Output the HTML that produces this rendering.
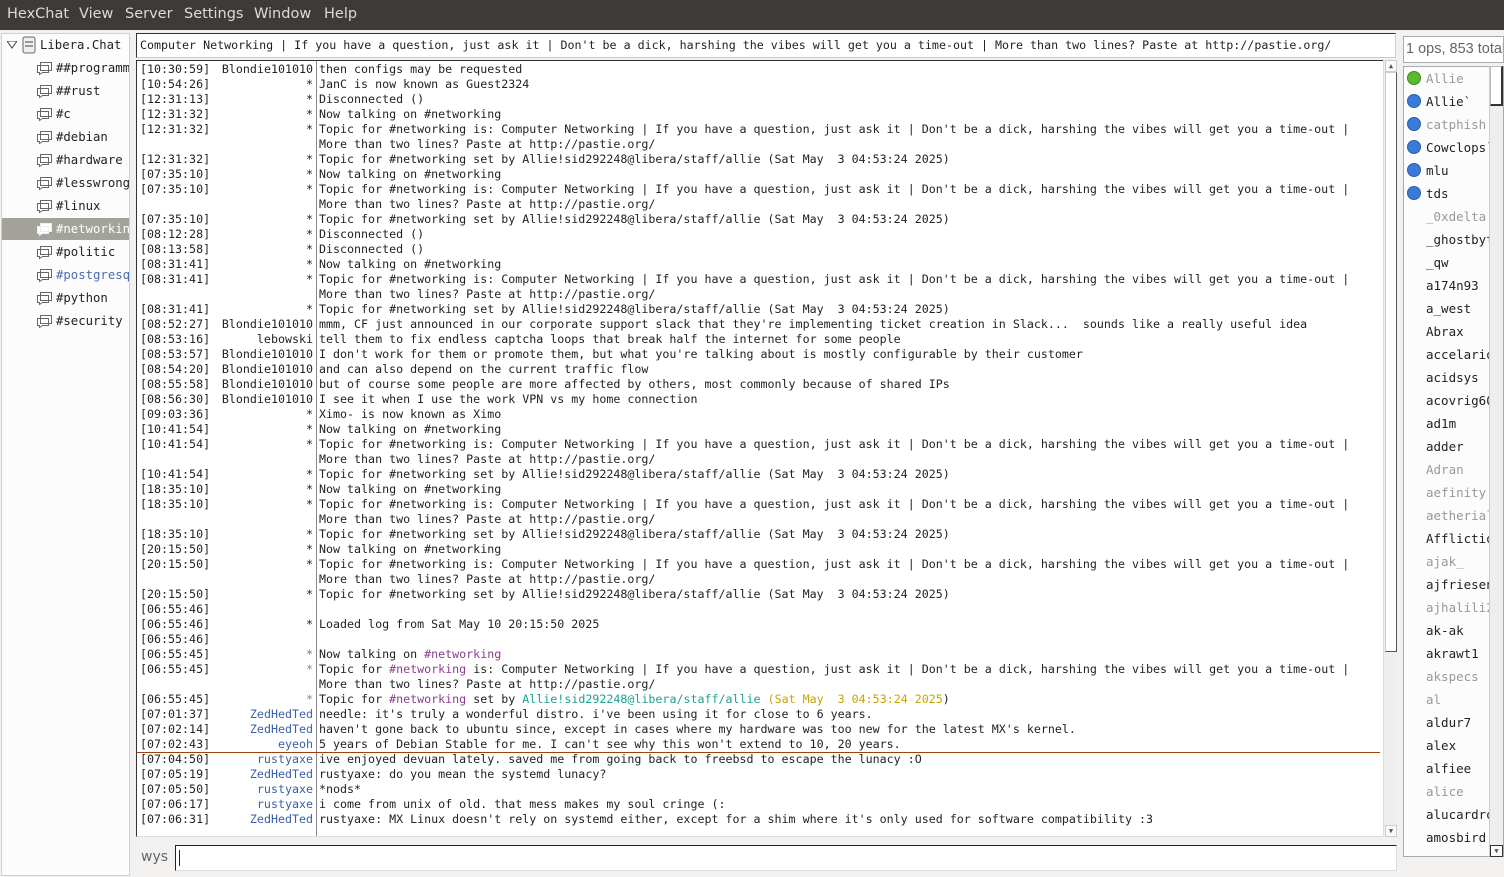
<!DOCTYPE html>
<html><head><meta charset="utf-8"><style>
*{margin:0;padding:0;box-sizing:border-box}
body{width:1504px;height:877px;background:#f2f1f0;font-family:"DejaVu Sans Mono","Liberation Mono",monospace;font-size:11.65px;color:#222;position:relative;overflow:hidden}
#menu{position:absolute;left:0;top:0;width:1504px;height:30px;background:#3c3b37;color:#dfdbd2;font-family:"DejaVu Sans","Liberation Sans",sans-serif;font-size:14.5px}
#menu span{position:absolute;top:6px}
#side{position:absolute;left:1px;top:33px;width:129px;height:843px;background:#fcfcfc;border:1px solid #d3d1cc;font-family:"DejaVu Sans Mono",monospace;font-size:12.3px}
.it{position:absolute;left:0;width:127px;height:22px;line-height:22px;white-space:nowrap;overflow:hidden}
.it svg{position:absolute;left:34px;top:4px}
.it span{position:absolute;left:54px}
.sel{background:#a3a29b;color:#fff}
#topic{position:absolute;left:136px;top:33px;width:1260px;height:25px;background:#fff;border:1px solid #333;border-right-color:#ccc;border-bottom-color:#ccc;line-height:22px;padding-left:3px;white-space:nowrap;overflow:hidden}
#chat{position:absolute;left:136px;top:60px;width:1261px;height:777px;background:#fff;border:1px solid #333;border-right-color:#ddd;border-bottom-color:#ddd}
#sep{position:absolute;left:179px;top:0;width:1px;height:775px;background:#888}
#rows{position:absolute;left:0;top:1px}
.r{height:15px;line-height:15px;position:relative;white-space:pre;width:1245px}
.r i{font-style:normal;position:absolute;left:3px}
.r b{font-weight:normal;position:absolute;right:1069px;text-align:right}
.r s{text-decoration:none;position:absolute;left:182px}
.g{color:#4aa02c}.p{color:#8a3d8a}.t{color:#1f9f8f}.y{color:#c9a300}.bl{color:#3b5ea8}.st{color:#888}
#marker{position:absolute;left:0;top:691px;width:1243px;height:1px;background:#a0410d}
#vs{position:absolute;left:1383px;top:60px;width:14px;height:777px;background:#eee;border-left:1px solid #ddd}
#wys{position:absolute;left:141px;top:849px;font-family:"DejaVu Sans",sans-serif;font-size:14px;color:#666}
#inp{position:absolute;left:175px;top:845px;width:1222px;height:26px;background:#fff;border:1px solid #222;border-right-color:#ddd;border-bottom-color:#ddd}
#inp:after{content:"";position:absolute;left:3px;top:4px;width:1px;height:16px;background:#222}
#uh{position:absolute;left:1403px;top:36px;width:101px;height:27px;background:#fff;border:1px solid #aaa;font-family:"Liberation Sans",sans-serif;font-size:14.5px;color:#666;line-height:25px;padding-left:2px;white-space:nowrap;overflow:hidden}
#ul{position:absolute;left:1403px;top:66px;width:101px;height:791px;background:#fcfcfc;border:1px solid #aaa;font-size:12.5px;overflow:hidden}
#ul div{position:absolute;left:22px;height:23px;line-height:23px;white-space:nowrap}
#ul .d{position:absolute;left:3px;width:14px;height:14px;border-radius:50%;background:#3a7ad9;border:1px solid #2a5fa8}
#uvs{position:absolute;left:1489px;top:66px;width:14px;height:791px;background:#eee;border-left:1px solid #ccc}
.gr{color:#999}
</style></head><body>
<div id="menu"><span style="left:7px">HexChat</span><span style="left:79px">View</span><span style="left:125px">Server</span><span style="left:184px">Settings</span><span style="left:254px">Window</span><span style="left:324px">Help</span></div>

<div id="side">
<div class="it" style="top:0"><svg style="left:5px;top:7px" width="10" height="8"><path d="M0 0H10L5 7Z" fill="none" stroke="#444"/></svg><svg style="left:20px;top:2px" width="14" height="18"><rect x="1" y="1" width="12" height="16" rx="2" fill="#eee" stroke="#666"/><rect x="3" y="5" width="8" height="2" fill="#999"/><rect x="3" y="9" width="8" height="2" fill="#999"/></svg><span style="left:38px">Libera.Chat</span></div>
<div class="it" style="top:23px"><svg width="17" height="15"><path d="M4.5 1.5h11v8h-11z M1.5 4.5h11v7h-6l-3 2v-2h-2z" fill="#fff" stroke="#666"/></svg><span>##programming</span></div>
<div class="it" style="top:46px"><svg width="17" height="15"><path d="M4.5 1.5h11v8h-11z M1.5 4.5h11v7h-6l-3 2v-2h-2z" fill="#fff" stroke="#666"/></svg><span>##rust</span></div>
<div class="it" style="top:69px"><svg width="17" height="15"><path d="M4.5 1.5h11v8h-11z M1.5 4.5h11v7h-6l-3 2v-2h-2z" fill="#fff" stroke="#666"/></svg><span>#c</span></div>
<div class="it" style="top:92px"><svg width="17" height="15"><path d="M4.5 1.5h11v8h-11z M1.5 4.5h11v7h-6l-3 2v-2h-2z" fill="#fff" stroke="#666"/></svg><span>#debian</span></div>
<div class="it" style="top:115px"><svg width="17" height="15"><path d="M4.5 1.5h11v8h-11z M1.5 4.5h11v7h-6l-3 2v-2h-2z" fill="#fff" stroke="#666"/></svg><span>#hardware</span></div>
<div class="it" style="top:138px"><svg width="17" height="15"><path d="M4.5 1.5h11v8h-11z M1.5 4.5h11v7h-6l-3 2v-2h-2z" fill="#fff" stroke="#666"/></svg><span>#lesswrong</span></div>
<div class="it" style="top:161px"><svg width="17" height="15"><path d="M4.5 1.5h11v8h-11z M1.5 4.5h11v7h-6l-3 2v-2h-2z" fill="#fff" stroke="#666"/></svg><span>#linux</span></div>
<div class="it sel" style="top:184px"><svg width="17" height="15"><path d="M4.5 1.5h11v8h-11z M1.5 4.5h11v7h-6l-3 2v-2h-2z" fill="#fff" stroke="#eee"/></svg><span>#networking</span></div>
<div class="it" style="top:207px"><svg width="17" height="15"><path d="M4.5 1.5h11v8h-11z M1.5 4.5h11v7h-6l-3 2v-2h-2z" fill="#fff" stroke="#666"/></svg><span>#politic</span></div>
<div class="it" style="top:230px"><svg width="17" height="15"><path d="M4.5 1.5h11v8h-11z M1.5 4.5h11v7h-6l-3 2v-2h-2z" fill="#fff" stroke="#666"/></svg><span style="color:#4a6cb5">#postgresql</span></div>
<div class="it" style="top:253px"><svg width="17" height="15"><path d="M4.5 1.5h11v8h-11z M1.5 4.5h11v7h-6l-3 2v-2h-2z" fill="#fff" stroke="#666"/></svg><span>#python</span></div>
<div class="it" style="top:276px"><svg width="17" height="15"><path d="M4.5 1.5h11v8h-11z M1.5 4.5h11v7h-6l-3 2v-2h-2z" fill="#fff" stroke="#666"/></svg><span>#security</span></div>
</div>

<div id="topic">Computer Networking | If you have a question, just ask it | Don't be a dick, harshing the vibes will get you a time-out | More than two lines? Paste at http://pastie.org/</div>

<div id="chat"><div id="sep"></div><div id="rows">
<div class="r"><i>[10:30:59]</i><b>Blondie101010</b><s>then configs may be requested</s></div>
<div class="r"><i>[10:54:26]</i><b>*</b><s>JanC is now known as Guest2324</s></div>
<div class="r"><i>[12:31:13]</i><b>*</b><s>Disconnected ()</s></div>
<div class="r"><i>[12:31:32]</i><b>*</b><s>Now talking on #networking</s></div>
<div class="r"><i>[12:31:32]</i><b>*</b><s>Topic for #networking is: Computer Networking | If you have a question, just ask it | Don't be a dick, harshing the vibes will get you a time-out |</s></div>
<div class="r"><s>More than two lines? Paste at http://pastie.org/</s></div>
<div class="r"><i>[12:31:32]</i><b>*</b><s>Topic for #networking set by Allie!sid292248@libera/staff/allie (Sat May  3 04:53:24 2025)</s></div>
<div class="r"><i>[07:35:10]</i><b>*</b><s>Now talking on #networking</s></div>
<div class="r"><i>[07:35:10]</i><b>*</b><s>Topic for #networking is: Computer Networking | If you have a question, just ask it | Don't be a dick, harshing the vibes will get you a time-out |</s></div>
<div class="r"><s>More than two lines? Paste at http://pastie.org/</s></div>
<div class="r"><i>[07:35:10]</i><b>*</b><s>Topic for #networking set by Allie!sid292248@libera/staff/allie (Sat May  3 04:53:24 2025)</s></div>
<div class="r"><i>[08:12:28]</i><b>*</b><s>Disconnected ()</s></div>
<div class="r"><i>[08:13:58]</i><b>*</b><s>Disconnected ()</s></div>
<div class="r"><i>[08:31:41]</i><b>*</b><s>Now talking on #networking</s></div>
<div class="r"><i>[08:31:41]</i><b>*</b><s>Topic for #networking is: Computer Networking | If you have a question, just ask it | Don't be a dick, harshing the vibes will get you a time-out |</s></div>
<div class="r"><s>More than two lines? Paste at http://pastie.org/</s></div>
<div class="r"><i>[08:31:41]</i><b>*</b><s>Topic for #networking set by Allie!sid292248@libera/staff/allie (Sat May  3 04:53:24 2025)</s></div>
<div class="r"><i>[08:52:27]</i><b>Blondie101010</b><s>mmm, CF just announced in our corporate support slack that they're implementing ticket creation in Slack...  sounds like a really useful idea</s></div>
<div class="r"><i>[08:53:16]</i><b>lebowski</b><s>tell them to fix endless captcha loops that break half the internet for some people</s></div>
<div class="r"><i>[08:53:57]</i><b>Blondie101010</b><s>I don't work for them or promote them, but what you're talking about is mostly configurable by their customer</s></div>
<div class="r"><i>[08:54:20]</i><b>Blondie101010</b><s>and can also depend on the current traffic flow</s></div>
<div class="r"><i>[08:55:58]</i><b>Blondie101010</b><s>but of course some people are more affected by others, most commonly because of shared IPs</s></div>
<div class="r"><i>[08:56:30]</i><b>Blondie101010</b><s>I see it when I use the work VPN vs my home connection</s></div>
<div class="r"><i>[09:03:36]</i><b>*</b><s>Ximo- is now known as Ximo</s></div>
<div class="r"><i>[10:41:54]</i><b>*</b><s>Now talking on #networking</s></div>
<div class="r"><i>[10:41:54]</i><b>*</b><s>Topic for #networking is: Computer Networking | If you have a question, just ask it | Don't be a dick, harshing the vibes will get you a time-out |</s></div>
<div class="r"><s>More than two lines? Paste at http://pastie.org/</s></div>
<div class="r"><i>[10:41:54]</i><b>*</b><s>Topic for #networking set by Allie!sid292248@libera/staff/allie (Sat May  3 04:53:24 2025)</s></div>
<div class="r"><i>[18:35:10]</i><b>*</b><s>Now talking on #networking</s></div>
<div class="r"><i>[18:35:10]</i><b>*</b><s>Topic for #networking is: Computer Networking | If you have a question, just ask it | Don't be a dick, harshing the vibes will get you a time-out |</s></div>
<div class="r"><s>More than two lines? Paste at http://pastie.org/</s></div>
<div class="r"><i>[18:35:10]</i><b>*</b><s>Topic for #networking set by Allie!sid292248@libera/staff/allie (Sat May  3 04:53:24 2025)</s></div>
<div class="r"><i>[20:15:50]</i><b>*</b><s>Now talking on #networking</s></div>
<div class="r"><i>[20:15:50]</i><b>*</b><s>Topic for #networking is: Computer Networking | If you have a question, just ask it | Don't be a dick, harshing the vibes will get you a time-out |</s></div>
<div class="r"><s>More than two lines? Paste at http://pastie.org/</s></div>
<div class="r"><i>[20:15:50]</i><b>*</b><s>Topic for #networking set by Allie!sid292248@libera/staff/allie (Sat May  3 04:53:24 2025)</s></div>
<div class="r"><i>[06:55:46]</i></div>
<div class="r"><i>[06:55:46]</i><b>*</b><s>Loaded log from Sat May 10 20:15:50 2025</s></div>
<div class="r"><i>[06:55:46]</i></div>
<div class="r"><i>[06:55:45]</i><b class="g">*</b><s>Now talking on <span class="p">#networking</span></s></div>
<div class="r"><i>[06:55:45]</i><b class="st">*</b><s>Topic for <span class="p">#networking</span> is: Computer Networking | If you have a question, just ask it | Don't be a dick, harshing the vibes will get you a time-out |</s></div>
<div class="r"><s>More than two lines? Paste at http://pastie.org/</s></div>
<div class="r"><i>[06:55:45]</i><b class="st">*</b><s>Topic for <span class="p">#networking</span> set by <span class="t">Allie!sid292248@libera/staff/allie</span> <span class="y">(Sat May  3 04:53:24 2025</span>)</s></div>
<div class="r"><i>[07:01:37]</i><b class="bl">ZedHedTed</b><s>needle: it's truly a wonderful distro. i've been using it for close to 6 years.</s></div>
<div class="r"><i>[07:02:14]</i><b class="bl">ZedHedTed</b><s>haven't gone back to ubuntu since, except in cases where my hardware was too new for the latest MX's kernel.</s></div>
<div class="r"><i>[07:02:43]</i><b class="bl">eyeoh</b><s>5 years of Debian Stable for me. I can't see why this won't extend to 10, 20 years.</s></div>
<div class="r"><i>[07:04:50]</i><b class="bl">rustyaxe</b><s>ive enjoyed devuan lately. saved me from going back to freebsd to escape the lunacy :O</s></div>
<div class="r"><i>[07:05:19]</i><b class="bl">ZedHedTed</b><s>rustyaxe: do you mean the systemd lunacy?</s></div>
<div class="r"><i>[07:05:50]</i><b class="bl">rustyaxe</b><s>*nods*</s></div>
<div class="r"><i>[07:06:17]</i><b class="bl">rustyaxe</b><s>i come from unix of old. that mess makes my soul cringe (:</s></div>
<div class="r"><i>[07:06:31]</i><b class="bl">ZedHedTed</b><s>rustyaxe: MX Linux doesn't rely on systemd either, except for a shim where it's only used for software compatibility :3</s></div>
</div><div id="marker"></div></div>
<div id="vs"><div style="position:absolute;left:1px;top:0;width:12px;height:12px;border:1px solid #ccc;background:#fafafa;font-size:7px;text-align:center;line-height:10px;color:#555">▲</div><div style="position:absolute;left:1px;top:12px;width:12px;height:580px;background:#fff;border:1px solid #ccc;border-right:1px solid #555;border-bottom:1px solid #555"></div><div style="position:absolute;left:1px;bottom:0;width:12px;height:12px;border:1px solid #ccc;background:#fafafa;font-size:7px;text-align:center;line-height:10px;color:#555">▼</div></div>

<div id="wys">wys</div><div id="inp"></div>

<div id="uh">1 ops, 853 total</div>
<div id="ul">
<div style="top:0" class="gr"><span class="d" style="left:-19px;top:4px;background:#5cb82c;border-color:#3f8a1c;position:absolute"></span>Allie</div>
<div style="top:23px"><span class="d" style="left:-19px;top:4px;position:absolute"></span>Allie`</div>
<div style="top:46px" class="gr"><span class="d" style="left:-19px;top:4px;position:absolute"></span>catphish</div>
<div style="top:69px"><span class="d" style="left:-19px;top:4px;position:absolute"></span>Cowclops`</div>
<div style="top:92px"><span class="d" style="left:-19px;top:4px;position:absolute"></span>mlu</div>
<div style="top:115px"><span class="d" style="left:-19px;top:4px;position:absolute"></span>tds</div>
<div style="top:138px" class="gr">_0xdelta</div>
<div style="top:161px">_ghostbyte</div>
<div style="top:184px">_qw</div>
<div style="top:207px">a174n93</div>
<div style="top:230px">a_west</div>
<div style="top:253px">Abrax</div>
<div style="top:276px">accelario</div>
<div style="top:299px">acidsys</div>
<div style="top:322px">acovrig60</div>
<div style="top:345px">ad1m</div>
<div style="top:368px">adder</div>
<div style="top:391px" class="gr">Adran</div>
<div style="top:414px" class="gr">aefinity</div>
<div style="top:437px" class="gr">aetherial</div>
<div style="top:460px">Afflictio</div>
<div style="top:483px" class="gr">ajak_</div>
<div style="top:506px">ajfriesen</div>
<div style="top:529px" class="gr">ajhalili2</div>
<div style="top:552px">ak-ak</div>
<div style="top:575px">akrawt1</div>
<div style="top:598px" class="gr">akspecs</div>
<div style="top:621px" class="gr">al</div>
<div style="top:644px">aldur7</div>
<div style="top:667px">alex</div>
<div style="top:690px">alfiee</div>
<div style="top:713px" class="gr">alice</div>
<div style="top:736px">alucardro</div>
<div style="top:759px">amosbird</div>
</div>
<div id="uvs"><div style="position:absolute;left:0;top:0;width:13px;height:40px;background:#fff;border:1px solid #bbb;border-right:2px solid #333;border-bottom:2px solid #333"></div><div style="position:absolute;left:0;bottom:0;width:13px;height:12px;background:#fafafa;border:1px solid #333;font-size:7px;text-align:center;line-height:10px;color:#555">▼</div></div>
</body></html>
